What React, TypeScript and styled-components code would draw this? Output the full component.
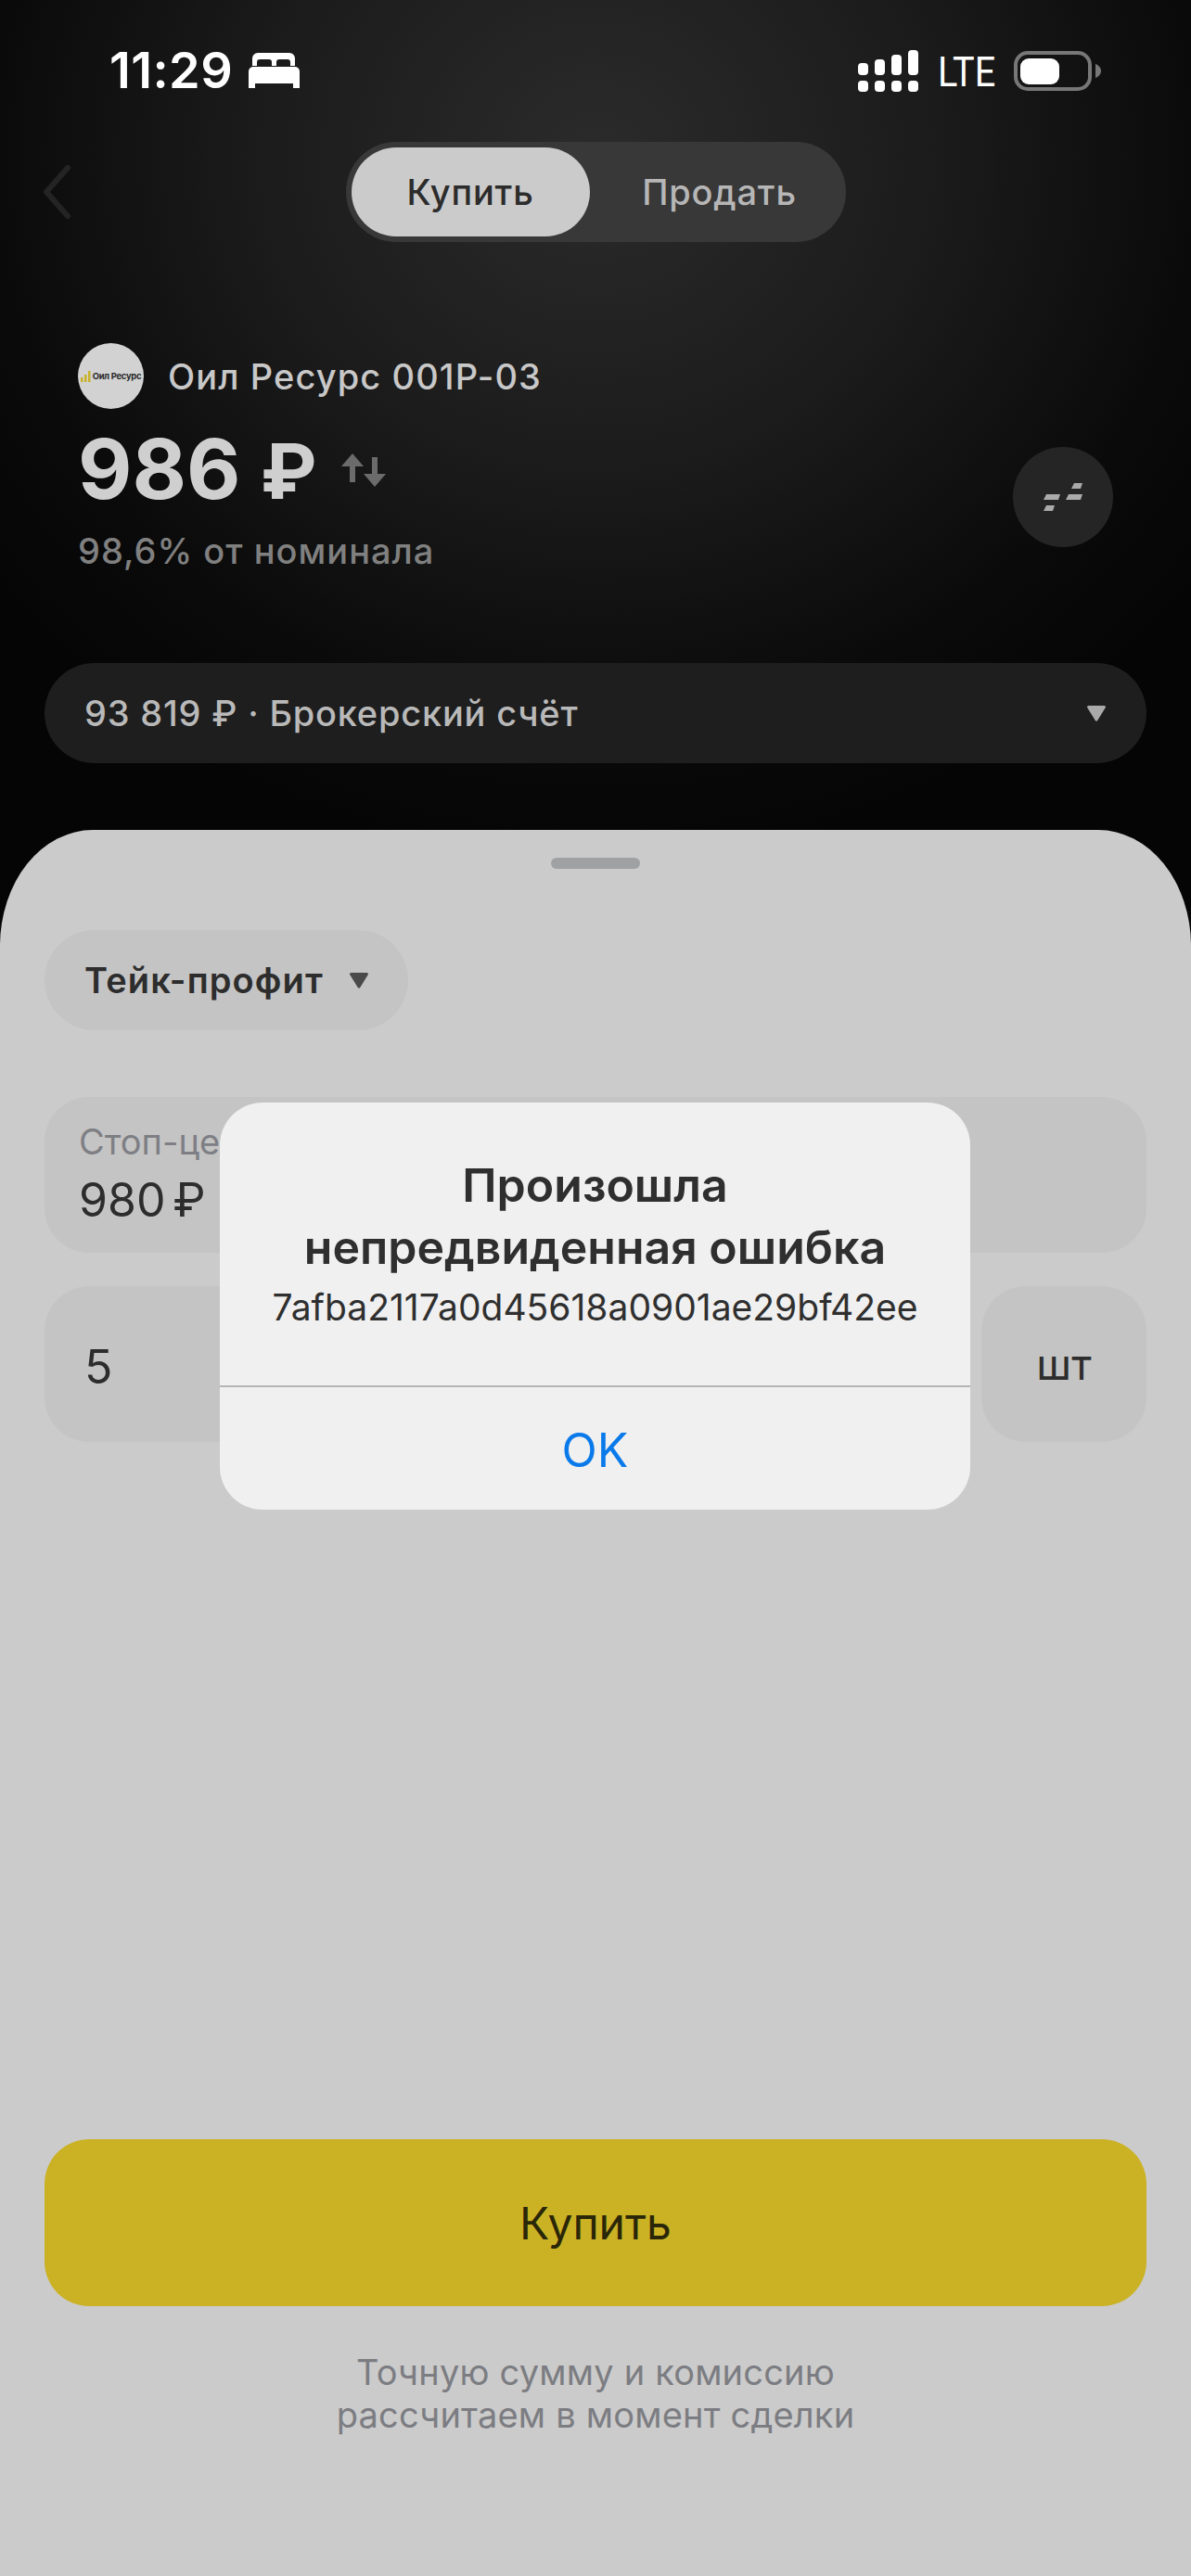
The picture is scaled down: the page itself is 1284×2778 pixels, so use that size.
import React from "react";
import styled, { createGlobalStyle } from "styled-components";

const GlobalStyle = createGlobalStyle`
  html, body {
    margin: 0;
    padding: 0;
    background: #000;
  }
  * {
    box-sizing: border-box;
  }
`;

const Page = styled.div`
  position: relative;
  width: 1284px;
  height: 2778px;
  overflow: hidden;
  display: flex;
  flex-direction: column;
  font-family: Inter, "Noto Sans", sans-serif;
  background:
    radial-gradient(ellipse 820px 760px at 50% 170px, #2b2b2b 0%, #1b1b1b 45%, #0a0a0a 80%, #050505 100%),
    #000;
`;

const Top = styled.div`
  height: 895px;
  display: flex;
  flex-direction: column;
`;

const StatusBar = styled.div`
  height: 153px;
  padding: 50px 97px 0 118px;
  display: flex;
  justify-content: space-between;
  align-items: flex-start;
  color: #fff;
`;

const StatusGroup = styled.div`
  display: flex;
  align-items: center;
  height: 52px;
`;

const Time = styled.span`
  font-size: 54px;
  font-weight: 600;
  letter-spacing: 0.4px;
  line-height: 52px;
`;

const Lte = styled.span`
  font-family: Roboto, sans-serif;
  font-size: 44px;
  line-height: 52px;
  width: 61px;
  margin: 4px 21px 0;
  display: inline-block;
  transform: scaleX(0.9);
  transform-origin: left center;
`;

const Header = styled.div`
  height: 108px;
  display: grid;
  grid-template-columns: 1fr auto 1fr;
  align-items: center;
`;

const BackButton = styled.div`
  padding-left: 45px;
  display: flex;
  align-items: center;
`;

const Segment = styled.div`
  width: 539px;
  height: 108px;
  padding: 6px;
  border-radius: 54px;
  background: #383838;
  display: flex;
`;

const SegmentItem = styled.div<{ $active?: boolean }>`
  width: ${(p) => (p.$active ? "257px" : "270px")};
  padding-left: ${(p) => (p.$active ? "0" : "10px")};
  border-radius: 48px;
  background: ${(p) => (p.$active ? "#cbcbcb" : "transparent")};
  color: ${(p) => (p.$active ? "#2c2c2c" : "#b6b6b6")};
  font-size: 38px;
  font-weight: 500;
  letter-spacing: 0.8px;
  display: flex;
  align-items: center;
  justify-content: center;
`;

const Instrument = styled.div`
  height: 250px;
  margin-top: 109px;
  padding: 0 84px;
  display: flex;
  justify-content: space-between;
  align-items: flex-start;
`;

const InstrumentInfo = styled.div`
  display: flex;
  flex-direction: column;
`;

const NameRow = styled.div`
  display: flex;
  align-items: center;
  gap: 26px;
  height: 71px;
`;

const LogoCircle = styled.div`
  width: 71px;
  height: 71px;
  border-radius: 50%;
  background: #d2d2d2;
  display: flex;
  align-items: center;
  justify-content: center;
  gap: 2px;
`;

const LogoText = styled.span`
  font-size: 9.5px;
  font-weight: 700;
  letter-spacing: -0.3px;
  color: #2a2a2a;
  white-space: nowrap;
`;

const Name = styled.span`
  font-size: 38px;
  font-weight: 500;
  letter-spacing: 1.1px;
  color: #c8c8c8;
`;

const PriceRow = styled.div`
  margin-top: 21px;
  height: 90px;
  display: flex;
  align-items: center;
  gap: 26px;
`;

const Price = styled.span`
  font-size: 90px;
  font-weight: 700;
  line-height: 90px;
  color: #cfcfcf;
`;

const Ruble = styled.span`
  font-size: 82px;
`;

const Nominal = styled.div`
  margin-top: 18px;
  font-size: 38px;
  line-height: 48px;
  font-weight: 500;
  letter-spacing: 1px;
  color: #808080;
`;

const RoundButton = styled.div`
  width: 108px;
  height: 108px;
  margin-top: 112px;
  border-radius: 50%;
  background: #252525;
  display: flex;
  align-items: center;
  justify-content: center;
`;

const AccountPill = styled.div`
  margin: 95px 48px 0;
  height: 108px;
  border-radius: 54px;
  background: #1e1e1e;
  padding: 0 44px 0 43px;
  display: flex;
  align-items: center;
  justify-content: space-between;
  font-size: 38px;
  font-weight: 500;
  letter-spacing: 0.8px;
  color: #b9b9b9;
`;

const Sheet = styled.div`
  flex: 1;
  background: #cbcbcb;
  border-radius: 100px 100px 0 0 / 125px 125px 0 0;
  padding: 30px 48px 0;
  display: flex;
  flex-direction: column;
`;

const Handle = styled.div`
  width: 96px;
  height: 12px;
  border-radius: 6px;
  background: #a0a1a3;
  align-self: center;
`;

const OrderSelect = styled.div`
  margin-top: 66px;
  width: 392px;
  height: 108px;
  border-radius: 54px;
  background: #c4c4c4;
  padding: 0 43px;
  display: flex;
  align-items: center;
  justify-content: space-between;
  font-size: 38px;
  font-weight: 600;
  letter-spacing: 1.1px;
  color: #2d2d2d;
`;

const PriceField = styled.div`
  margin-top: 72px;
  height: 168px;
  border-radius: 48px;
  background: #c4c4c4;
  padding: 25px 37px;
  display: flex;
  flex-direction: column;
`;

const FieldLabel = styled.span`
  font-size: 38px;
  line-height: 46px;
  color: #7e7f84;
`;

const FieldValue = styled.span`
  margin-top: 9px;
  font-size: 50px;
  line-height: 62px;
  word-spacing: -6px;
  color: #2d2d2d;
`;

const QuantityRow = styled.div`
  margin-top: 36px;
  display: flex;
  justify-content: space-between;
`;

const QuantityField = styled.div`
  width: 900px;
  height: 168px;
  border-radius: 48px;
  background: #c4c4c4;
  padding: 6px 0 0 43px;
  display: flex;
  align-items: center;
  font-size: 50px;
  color: #2d2d2d;
`;

const UnitField = styled.div`
  width: 178px;
  height: 168px;
  border-radius: 48px;
  background: #c4c4c4;
  display: flex;
  align-items: center;
  justify-content: center;
  font-size: 46px;
  color: #2d2d2d;
`;

const BuyButton = styled.div`
  margin-top: auto;
  height: 180px;
  border-radius: 48px;
  background: #cbb224;
  display: flex;
  align-items: center;
  justify-content: center;
  font-size: 48px;
  color: #2a2608;
`;

const Hint = styled.div`
  margin: 48px 0 151px;
  text-align: center;
  font-size: 38px;
  line-height: 46px;
  letter-spacing: 0.2px;
  color: #7c7d82;
`;

const Alert = styled.div`
  position: absolute;
  left: 237px;
  top: 1189px;
  width: 809px;
  height: 439px;
  border-radius: 46px;
  background: #f0f0f0;
  display: flex;
  flex-direction: column;
`;

const AlertBody = styled.div`
  height: 307px;
  padding-top: 56px;
  text-align: center;
  border-bottom: 2px solid #b5b5b5;
  color: #2f2f2f;
`;

const AlertTitle = styled.div`
  font-size: 50px;
  line-height: 67px;
  font-weight: 600;
`;

const AlertMessage = styled.div`
  margin-top: 7px;
  font-size: 39px;
  line-height: 48px;
`;

const AlertAction = styled.div`
  flex: 1;
  padding-top: 4px;
  display: flex;
  align-items: center;
  justify-content: center;
  font-size: 50px;
  color: #0a7aea;
`;

const Bed = () => (
  <svg width="55" height="38" viewBox="0 0 55 38" style={{ marginLeft: 17 }}>
    <path
      fill="#fff"
      fillRule="evenodd"
      d="M10 0h34a6 6 0 0 1 6 6v8h-5v-4a3 3 0 0 0-3-3H33a3 3 0 0 0-3 3v4h-5v-4a3 3 0 0 0-3-3H12a3 3 0 0 0-3 3v4H4V6a6 6 0 0 1 6-6ZM5 15h45a5 5 0 0 1 5 5v18h-7v-5H7v5H0V20a5 5 0 0 1 5-5Z"
    />
  </svg>
);

const Signal = () => (
  <svg width="65" height="45" viewBox="0 0 65 45" fill="#fff">
    <rect x="0" y="14" width="11" height="13" rx="4" />
    <rect x="18" y="10" width="11" height="17" rx="4" />
    <rect x="36" y="5" width="11" height="22" rx="4" />
    <rect x="54" y="0" width="11" height="27" rx="4" />
    <rect x="0" y="33" width="11" height="12" rx="4" />
    <rect x="18" y="33" width="11" height="12" rx="4" />
    <rect x="36" y="33" width="11" height="12" rx="4" />
    <rect x="54" y="33" width="11" height="12" rx="4" />
  </svg>
);

const Battery = () => (
  <svg width="94" height="43" viewBox="0 0 94 43">
    <rect x="2" y="2" width="80" height="39" rx="13" fill="none" stroke="#777" strokeWidth="4" />
    <rect x="7" y="8" width="42" height="28" rx="9" fill="#fff" />
    <path d="M88 14c3 1 6 4 6 7.500s-3 6.500-6 7.500Z" fill="#777" />
  </svg>
);

const BackChevron = () => (
  <svg width="32" height="60" viewBox="0 0 32 60" fill="none">
    <path d="M28 4 5 30l23 26" stroke="#242424" strokeWidth="6" strokeLinecap="round" strokeLinejoin="round" />
  </svg>
);

const LogoBars = () => (
  <svg width="11" height="12" viewBox="0 0 11 12" fill="#c9b128">
    <rect x="0" y="7" width="2.500" height="5" />
    <rect x="4" y="4" width="2.500" height="8" />
    <rect x="8" y="0" width="2.500" height="12" />
  </svg>
);

const SwapArrows = () => (
  <svg width="48" height="36" viewBox="0 0 48 36" fill="#6b6b6b">
    <path d="M12 0 24 14h-9v17H9V14H0Z" />
    <path d="M36 36 24 22h9V4h6v18h9Z" />
  </svg>
);

const Dashes = () => (
  <svg width="42" height="30" viewBox="0 0 42 30" fill="#aaa">
    <path d="M33 0h9l-2 6H30ZM27 12h15l-2 6H24ZM3 12h15l-2 6H0ZM3 24h9l-2 6H0Z" />
  </svg>
);

const Caret = ({ color }: { color: string }) => (
  <svg width="20" height="17" viewBox="0 0 20 17">
    <path d="M1.500 0h17a1.500 1.500 0 0 1 1.200 2.300L11.200 16a1.400 1.400 0 0 1-2.400 0L.3 2.300A1.500 1.500 0 0 1 1.500 0Z" fill={color} />
  </svg>
);

export default function App() {
  return (
    <>
      <GlobalStyle />
      <Page>
        <Top>
          <StatusBar>
            <StatusGroup>
              <Time>11:29</Time>
              <Bed />
            </StatusGroup>
            <StatusGroup>
              <Signal />
              <Lte>LTE</Lte>
              <Battery />
            </StatusGroup>
          </StatusBar>

          <Header>
            <BackButton>
              <BackChevron />
            </BackButton>
            <Segment>
              <SegmentItem $active>Купить</SegmentItem>
              <SegmentItem>Продать</SegmentItem>
            </Segment>
          </Header>

          <Instrument>
            <InstrumentInfo>
              <NameRow>
                <LogoCircle>
                  <LogoBars />
                  <LogoText>Оил Ресурс</LogoText>
                </LogoCircle>
                <Name>Оил Ресурс 001Р-03</Name>
              </NameRow>
              <PriceRow>
                <Price>
                  986 <Ruble>₽</Ruble>
                </Price>
                <SwapArrows />
              </PriceRow>
              <Nominal>98,6% от номинала</Nominal>
            </InstrumentInfo>
            <RoundButton>
              <Dashes />
            </RoundButton>
          </Instrument>

          <AccountPill>
            <span>93 819 ₽ · Брокерский счёт</span>
            <Caret color="#aaaaaa" />
          </AccountPill>
        </Top>

        <Sheet>
          <Handle />
          <OrderSelect>
            <span>Тейк-профит</span>
            <Caret color="#4a4a4a" />
          </OrderSelect>
          <PriceField>
            <FieldLabel>Стоп-цена</FieldLabel>
            <FieldValue>980 ₽</FieldValue>
          </PriceField>
          <QuantityRow>
            <QuantityField>5</QuantityField>
            <UnitField>шт</UnitField>
          </QuantityRow>
          <BuyButton>Купить</BuyButton>
          <Hint>
            Точную сумму и комиссию
            <br />
            рассчитаем в момент сделки
          </Hint>
        </Sheet>

        <Alert>
          <AlertBody>
            <AlertTitle>
              Произошла
              <br />
              непредвиденная ошибка
            </AlertTitle>
            <AlertMessage>7afba2117a0d45618a0901ae29bf42ee</AlertMessage>
          </AlertBody>
          <AlertAction>OK</AlertAction>
        </Alert>
      </Page>
    </>
  );
}
